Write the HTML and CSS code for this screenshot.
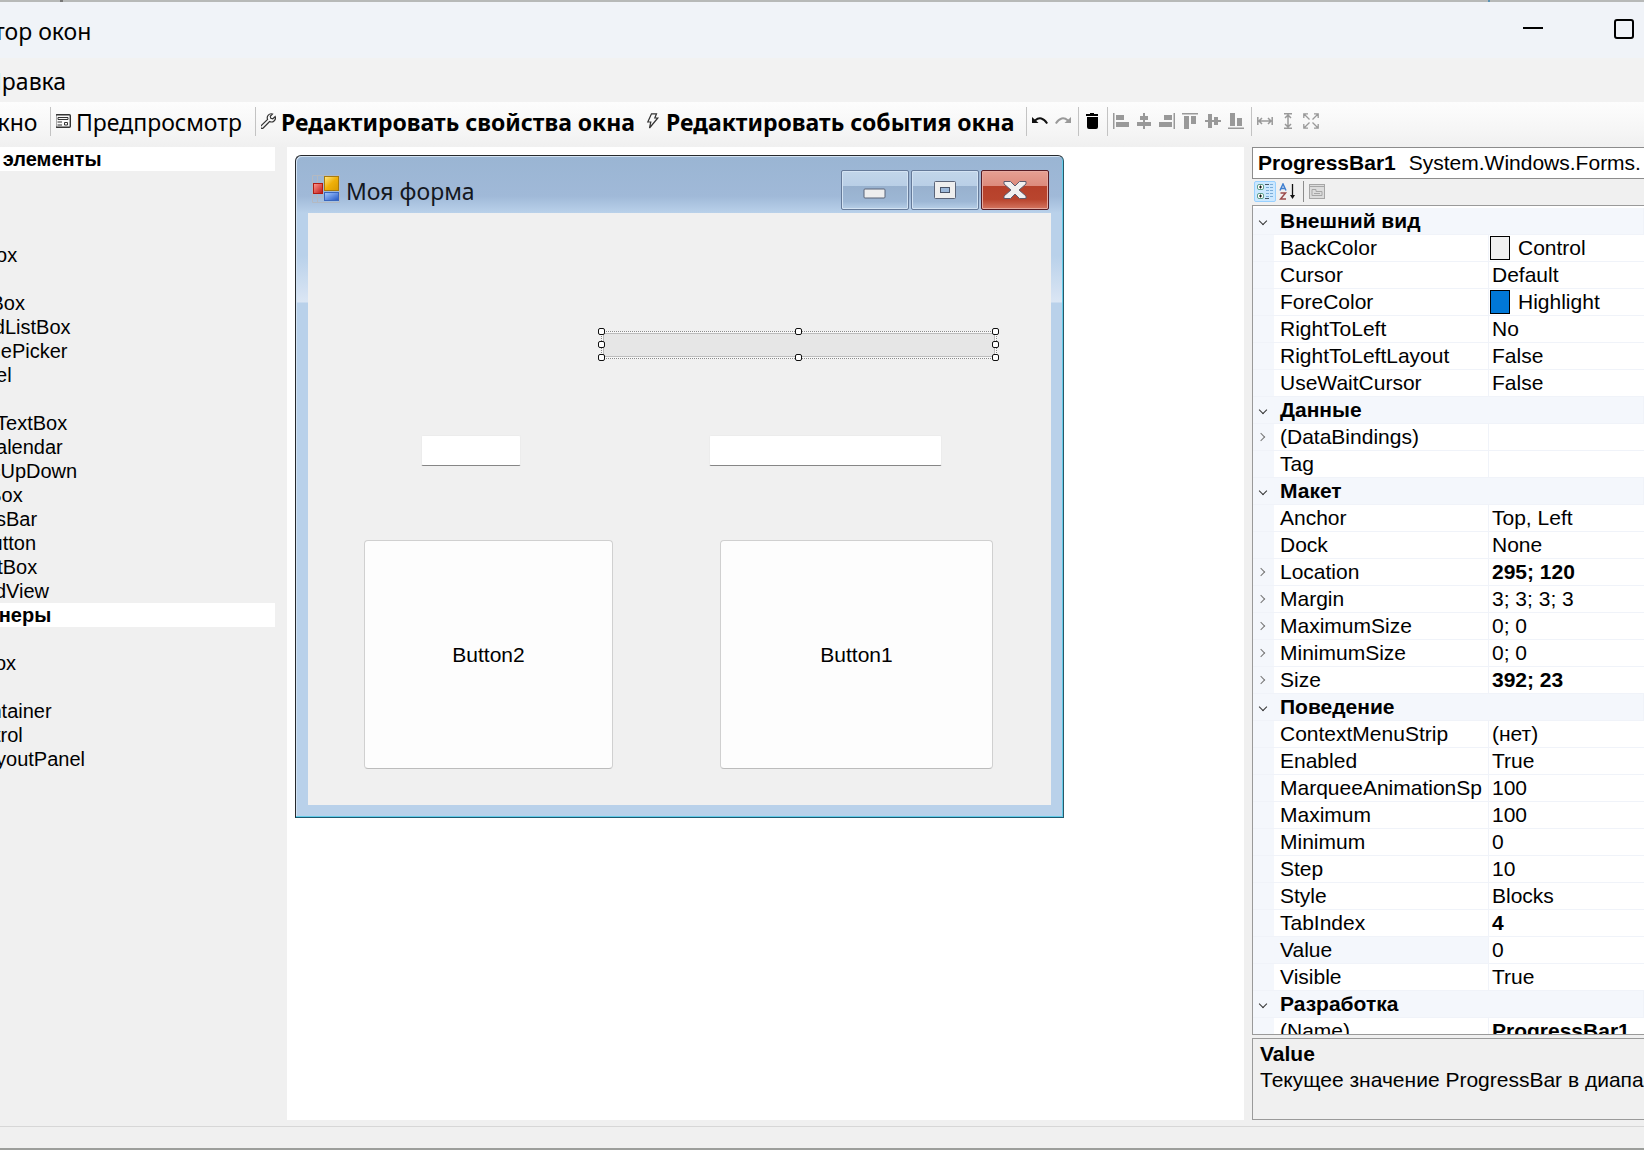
FILE: index.html
```html
<!DOCTYPE html>
<html lang="ru">
<head>
<meta charset="utf-8">
<title>Редактор окон</title>
<link rel="stylesheet" href="styles.css">
</head>
<body>
<div class="app">
  <div class="edge edge-top"></div>
  <header class="titlebar">
    <h1 class="app-title">Редактор окон</h1>
    <div class="caption-buttons">
      <button class="caption" aria-label="Свернуть"><svg width="20" height="20" viewBox="0 0 20 20"><path d="M0 9h20" stroke="#000" stroke-width="2"/></svg></button>
      <button class="caption" aria-label="Развернуть"><svg width="20" height="20" viewBox="0 0 20 20"><rect x="1" y="1" width="18" height="18" rx="2" fill="none" stroke="#000" stroke-width="2"/></svg></button>
    </div>
  </header>
  <nav class="menubar"><button class="menu-item">Правка</button></nav>

  <div class="toolbar" role="toolbar">
    <button class="tool tool-window">Окно</button>
    <span class="sep"></span>
    <button class="tool tool-preview">
      <svg class="icon" width="16" height="16" viewBox="0 0 16 16" fill="none" stroke="#333"><rect x=".7" y="1.7" width="14.6" height="12.6" rx="1" stroke-width="1.4"/><path d="M3 4.500h10v2H3zM9.500 9.500h3v2.500h-3z"/><path d="M2.500 9h4.500M2.500 12h4.500" stroke-width="1.200"/></svg>
      <span>Предпросмотр</span>
    </button>
    <span class="sep"></span>
    <button class="tool tool-props">
      <svg class="icon" width="16" height="16" viewBox="0 0 16 16" fill="none" stroke="#333" stroke-width="1.200"><path d="M12.500 1A4 4 0 0 0 7.600 6.400L1 12.800a1.500 1.500 0 0 0 2.200 2.200L9.600 8.500A4 4 0 0 0 15.200 3.600L12.800 5.800 10.800 5.300 10.300 3.300z"/></svg>
      <span>Редактировать свойства окна</span>
    </button>
    <button class="tool tool-events">
      <svg class="icon" width="16" height="16" viewBox="0 0 16 16" fill="none" stroke="#333" stroke-width="1.200"><path d="M6.500.8h5L9.800 5h3L4.500 15l1.300-6H2.800z"/></svg>
      <span>Редактировать события окна</span>
    </button>
    <span class="sep"></span>
    <button class="tool-icon" aria-label="Отменить"><svg width="16" height="16" viewBox="0 0 16 16"><path d="M3 7.500Q9.500 2 15.200 10.500" fill="none" stroke="#111" stroke-width="2"/><path d="M0 4v6h6.500z" fill="#111"/></svg></button>
    <button class="tool-icon" aria-label="Повторить"><svg width="16" height="16" viewBox="0 0 16 16"><path d="M13 7.500Q6.500 2 .8 10.500" fill="none" stroke="#999" stroke-width="2"/><path d="M16 4v6H9.500z" fill="#999"/></svg></button>
    <span class="sep"></span>
    <button class="tool-icon" aria-label="Удалить"><svg width="16" height="16" viewBox="0 0 16 16"><path d="M2 1h4V0h4v1h4v2H2zM3 4h11v10a2 2 0 0 1-2 2H5a2 2 0 0 1-2-2z"/></svg></button>
    <span class="sep"></span>
    <button class="tool-icon" aria-label="По левому краю"><svg width="16" height="16" viewBox="0 0 16 16" fill="#999"><path d="M0 0h1.500v16H0zM3 2h8v5H3zM3 9h13v5H3z"/></svg></button>
    <button class="tool-icon" aria-label="По центру"><svg width="16" height="16" viewBox="0 0 16 16" fill="#999"><path d="M7 0h2v16H7zM4 3h8v4H4zM1 9h14v4H1z"/></svg></button>
    <button class="tool-icon" aria-label="По правому краю"><svg width="16" height="16" viewBox="0 0 16 16" fill="#999"><path d="M14.500 0H16v16h-1.500zM5 2h8v5H5zM0 9h13v5H0z"/></svg></button>
    <button class="tool-icon" aria-label="По верхнему краю"><svg width="16" height="16" viewBox="0 0 16 16" fill="#999"><path d="M0 0h16v1.500H0zM2 3h5v13H2zM9 3h5v8H9z"/></svg></button>
    <button class="tool-icon" aria-label="По середине"><svg width="16" height="16" viewBox="0 0 16 16" fill="#999"><path d="M0 7h16v2H0zM3 1h4v14H3zM9 4h4v8H9z"/></svg></button>
    <button class="tool-icon" aria-label="По нижнему краю"><svg width="16" height="16" viewBox="0 0 16 16" fill="#999"><path d="M0 14.500h16V16H0zM2 0h5v13H2zM9 5h5v8H9z"/></svg></button>
    <span class="sep"></span>
    <button class="tool-icon" aria-label="Одинаковая ширина"><svg width="16" height="16" viewBox="0 0 16 16" fill="none" stroke="#999" stroke-width="1.500"><path d="M.8 4v8M15.200 4v8M2 8h12M5 5L2 8l3 3M11 5l3 3-3 3"/></svg></button>
    <button class="tool-icon" aria-label="Одинаковая высота"><svg width="16" height="16" viewBox="0 0 16 16" fill="none" stroke="#999" stroke-width="1.500"><path d="M4 .8h8M4 15.200h8M8 2v12M5 5l3-3 3 3M5 11l3 3 3-3"/></svg></button>
    <button class="tool-icon" aria-label="Одинаковый размер"><svg width="16" height="16" viewBox="0 0 16 16" fill="none" stroke="#999" stroke-width="1.300"><path d="M.8 5V.8H5M11 .8h4.200V5M15.200 11v4.200H11M5 15.200H.8V11M1 1l5.500 5.500M15 1L9.500 6.500M15 15L9.500 9.500M1 15l5.500-5.500"/></svg></button>
  </div>

  <main class="workspace">
    <aside class="toolbox">
      <h2 class="group">Общие элементы</h2>
      <ul class="items">
        <li></li><li></li><li></li><li>CheckBox</li><li></li><li>ComboBox</li>
        <li>CheckedListBox</li><li>DateTimePicker</li><li>LinkLabel</li><li></li>
        <li>MaskedTextBox</li><li>MonthCalendar</li><li>NumericUpDown</li><li>PictureBox</li>
        <li>ProgressBar</li><li>RadioButton</li><li>RichTextBox</li><li>DataGridView</li>
      </ul>
      <h2 class="group">Контейнеры</h2>
      <ul class="items">
        <li></li><li>GroupBox</li><li></li><li>SplitContainer</li><li>TabControl</li><li>TableLayoutPanel</li>
      </ul>
    </aside>

    <section class="designer">
      <div class="form-window">
        <div class="form-title">
          <svg class="form-icon" width="28" height="28" viewBox="0 0 28 28">
            <defs>
              <linearGradient id="gy" x1="0" y1="0" x2="1" y2="1"><stop offset="0" stop-color="#ffe98a"/><stop offset=".5" stop-color="#efb008"/><stop offset="1" stop-color="#d99a00"/></linearGradient>
              <linearGradient id="gr" x1="0" y1="0" x2="1" y2="1"><stop offset="0" stop-color="#ff9d92"/><stop offset="1" stop-color="#bd1212"/></linearGradient>
              <linearGradient id="gb" x1="0" y1="0" x2="1" y2="1"><stop offset="0" stop-color="#a8caff"/><stop offset="1" stop-color="#2257c4"/></linearGradient>
            </defs>
            <path d="M.5.500h27v27H.5zM5.500.500v27M.5 22h11" fill="none" stroke="#b3b9c2"/>
            <rect x="12.500" y="1.500" width="14" height="14" fill="url(#gy)" stroke="#a87a0c"/>
            <rect x="1.500" y="8.500" width="9" height="10" fill="url(#gr)" stroke="#b31b10"/>
            <rect x="12.500" y="17.500" width="14" height="8" fill="url(#gb)" stroke="#3a66bd"/>
          </svg>
          <span class="form-caption">Моя форма</span>
          <button class="aero" aria-label="Свернуть форму"><svg width="24" height="20" viewBox="0 0 24 20"><rect x="1" y="9" width="21" height="9" rx="1" fill="#eee" stroke="#5b6478"/></svg></button>
          <button class="aero" aria-label="Развернуть форму"><svg width="24" height="20" viewBox="0 0 24 20"><rect x="1.500" y="1.500" width="21" height="17" rx="1" fill="#eee" stroke="#5b6478"/><rect x="7.500" y="7.500" width="9" height="5" fill="#9db9da" stroke="#4a5468"/></svg></button>
          <button class="aero aero-close" aria-label="Закрыть форму"><svg width="24" height="20" viewBox="0 0 24 20"><path d="M1 1.500h6.500L12 6l4.500-4.500H23V4L16 10l7 6v2.500h-6.500L12 14l-4.500 4.500H1V16l7-6-7-6z" fill="#f0f0f0" stroke="#5d5a6c"/></svg></button>
        </div>
        <div class="client">
          <div class="ctl progress" role="progressbar" aria-label="ProgressBar1" aria-valuenow="0">
            <span class="bar"></span>
            <i class="h nw"></i><i class="h n"></i><i class="h ne"></i><i class="h w"></i><i class="h e"></i><i class="h sw"></i><i class="h s"></i><i class="h se"></i>
          </div>
          <input class="ctl field field-a" aria-label="TextBox1">
          <input class="ctl field field-b" aria-label="TextBox2">
          <button class="ctl push push-a">Button2</button>
          <button class="ctl push push-b">Button1</button>
        </div>
      </div>
    </section>

    <aside class="properties">
      <button class="object-picker" aria-haspopup="listbox"><b>ProgressBar1</b><span>System.Windows.Forms.</span></button>
      <div class="prop-tools">
        <button class="ptool active" aria-label="По категориям"><svg width="18" height="18" viewBox="0 0 18 18" fill="none"><rect x="1.500" y="1.500" width="6" height="5" rx="1.500" fill="#fff" stroke="#5fa089"/><rect x="1.500" y="10.500" width="6" height="5" rx="1.500" fill="#fff" stroke="#5fa089"/><path d="M3 4h3M4.500 2.500v3M3 13h3M4.500 11.500v3" stroke="#111"/><path d="M9 1.500h4M9 15.500h4" stroke="#456"/><path d="M10 4.500h7M10 7.500h7M10 10.500h7M10 13.500h7M14 1.500h3" stroke="#7badd8" stroke-dasharray="3 1"/></svg></button>
        <button class="ptool" aria-label="По алфавиту"><svg width="18" height="18" viewBox="0 0 18 18" fill="none"><path d="M1 7.500L4 1l3 6.500M2 5.500h4" stroke="#3f7fd0" stroke-width="1.500"/><path d="M1.500 10h5l-5 6h5.500" stroke="#9b4a4a" stroke-width="1.500"/><path d="M13.500 1v13" stroke="#111" stroke-width="1.300"/><path d="M11 12h5l-2.500 4z" fill="#111"/></svg></button>
        <span class="psep"></span>
        <button class="ptool" aria-label="Страницы свойств" disabled><svg width="18" height="18" viewBox="0 0 18 18" fill="none" stroke="#a6a6a6"><rect x="1.500" y="1.500" width="15" height="14" fill="#dcdcdc"/><path d="M2 3.500h14M4 6.500h4v2h6v4H4z"/><path d="M6 10.500h6"/></svg></button>
      </div>
      <div class="grid">
        <table class="props">
          <colgroup><col class="c-gutter"><col class="c-name"><col></colgroup>
          <tbody>
          <tr class="cat"><td class="open"></td><th colspan="2">Внешний вид</th></tr>
          <tr><td></td><th>BackColor</th><td><span class="swatch swatch-control"></span>Control</td></tr>
          <tr><td></td><th>Cursor</th><td>Default</td></tr>
          <tr><td></td><th>ForeColor</th><td><span class="swatch swatch-highlight"></span>Highlight</td></tr>
          <tr><td></td><th>RightToLeft</th><td>No</td></tr>
          <tr><td></td><th>RightToLeftLayout</th><td>False</td></tr>
          <tr><td></td><th>UseWaitCursor</th><td>False</td></tr>
          <tr class="cat"><td class="open"></td><th colspan="2">Данные</th></tr>
          <tr><td class="closed"></td><th>(DataBindings)</th><td></td></tr>
          <tr><td></td><th>Tag</th><td></td></tr>
          <tr class="cat"><td class="open"></td><th colspan="2">Макет</th></tr>
          <tr><td></td><th>Anchor</th><td>Top, Left</td></tr>
          <tr><td></td><th>Dock</th><td>None</td></tr>
          <tr><td class="closed"></td><th>Location</th><td><b>295; 120</b></td></tr>
          <tr><td class="closed"></td><th>Margin</th><td>3; 3; 3; 3</td></tr>
          <tr><td class="closed"></td><th>MaximumSize</th><td>0; 0</td></tr>
          <tr><td class="closed"></td><th>MinimumSize</th><td>0; 0</td></tr>
          <tr><td class="closed"></td><th>Size</th><td><b>392; 23</b></td></tr>
          <tr class="cat"><td class="open"></td><th colspan="2">Поведение</th></tr>
          <tr><td></td><th>ContextMenuStrip</th><td>(нет)</td></tr>
          <tr><td></td><th>Enabled</th><td>True</td></tr>
          <tr><td></td><th>MarqueeAnimationSp</th><td>100</td></tr>
          <tr><td></td><th>Maximum</th><td>100</td></tr>
          <tr><td></td><th>Minimum</th><td>0</td></tr>
          <tr><td></td><th>Step</th><td>10</td></tr>
          <tr><td></td><th>Style</th><td>Blocks</td></tr>
          <tr><td></td><th>TabIndex</th><td><b>4</b></td></tr>
          <tr class="selected"><td></td><th>Value</th><td>0</td></tr>
          <tr><td></td><th>Visible</th><td>True</td></tr>
          <tr class="cat"><td class="open"></td><th colspan="2">Разработка</th></tr>
          <tr><td></td><th>(Name)</th><td><b>ProgressBar1</b></td></tr>
          </tbody>
        </table>
      </div>
      <div class="help"><b>Value</b><p>Текущее значение ProgressBar в диапазоне</p></div>
    </aside>
  </main>
  <footer class="status"></footer>
  <div class="edge edge-bottom"></div>
</div>
</body>
</html>
```
FILE: styles.css
```css
* { box-sizing: border-box; }
body { margin: 0; background: #f0f0f0; color: #000; font: 21px/26px "Liberation Sans", Arial, sans-serif; }
h1, h2, p, ul { margin: 0; padding: 0; font-size: inherit; font-weight: inherit; list-style: none; }
button { border: 0; padding: 0; background: none; color: inherit; font: inherit; }
svg { display: block; flex: none; }

.app { display: flex; flex-direction: column; height: 100vh; overflow: hidden; }
.edge { flex: none; height: 2px; background: #b4b7b6; }
.edge-top { background: linear-gradient(90deg, transparent 60px, #777 60px 63px, transparent 63px 1488px, #5b93b5 1488px 1490px, transparent 1490px) #b7b9b8; }
.edge-bottom { background: #9c9e9b; }

.titlebar { display: flex; justify-content: space-between; flex: none; height: 56px; background: #f0f3f8; font: 23px/58px "Noto Sans", sans-serif; }
.app-title { margin-left: -71px; }
.caption-buttons { display: flex; gap: 71px; padding: 0 10px 2px 0; align-items: center; }
.caption { width: 20px; height: 20px; }

.menubar { flex: none; display: flex; height: 44px; background: #f2f2f2; font: 23px/46px "Noto Sans", sans-serif; }
.menu-item { margin-left: -15px; }

.toolbar { flex: none; display: flex; align-items: center; height: 45px; padding-bottom: 7px; background: linear-gradient(#fdfdfd, #f6f6f6 60%, #f0f0f0); font: 23px/38px "Noto Sans", sans-serif; }
.tool { flex: none; display: flex; align-items: center; gap: 5px; white-space: nowrap; overflow: hidden; }
.tool span { padding-top: 2px; }
.tool-window { margin-left: -20px; padding-top: 2px; width: 70px; }
.tool-preview { width: 199px; padding-left: 0; }
.tool-preview .icon, .tool-props .icon { margin-left: -1px; }
.tool-props { width: 384px; font-weight: 700; }
.tool-events { width: 381px; font-weight: 700; }
.tool-icon { flex: none; width: 23px; height: 16px; }
.sep { flex: none; width: 6px; height: 29px; border-left: 1px solid #c3c3c3; }

.workspace { flex: 1; min-height: 0; display: grid; grid-template-columns: 275px 1fr 392px; padding-bottom: 6px; }
.toolbox { overflow: hidden; font-size: 20px; line-height: 24px; white-space: nowrap; }
.group { height: 24px; background: #fff; font-weight: 700; text-indent: -71px; }
.items { margin-left: -74px; }
.items li { height: 24px; }

.designer { margin: 0 8px 0 12px; padding: 8px; background: #fff; }
.form-window {
  display: flex; flex-direction: column; width: 769px; height: 663px; padding: 0 12px 12px;
  border: 1px solid #26292d; border-right-color: #2b5868; border-bottom-color: #1c5a72; border-radius: 6px 6px 0 0;
  background: linear-gradient(#9ab5d3, #a0b9d8 40px, #b9d1ea 57px, #b9d1ea 100px, #dbe6f4 146px, #b9d1ea 147px);
  box-shadow: inset -1px -1px #62cbe8, inset 1px 1px #d3e3f3;
}
.form-title { flex: none; display: flex; align-items: center; gap: 2px; height: 57px; padding-right: 2px; font: 23px/40px "Noto Sans", sans-serif; }
.form-icon { margin: 9px 0 0 4px; }
.form-caption { flex: 1; padding: 13px 0 0 4px; color: #14181f; }
.aero {
  display: flex; align-items: center; justify-content: center; width: 68px; height: 40px; margin-top: 10px;
  border: 1px solid #657a99; border-radius: 2px; box-shadow: inset 0 0 0 1px #d3e3f3;
  background: linear-gradient(#c2d6ea, #b9cfe6 40%, #98b1ce 40%, #9db7d5 80%, #b7cfe7);
}
.aero-close { border-color: #551c24; box-shadow: inset 0 0 0 1px #e5aaa0; background: linear-gradient(#e5a093, #dc8a7c 40%, #b6402a 40%, #b9452e 75%, #d47560); }

.client { position: relative; flex: 1; background: #f0f0f0; }
.ctl { position: absolute; }
.progress { left: 293px; top: 118px; width: 396px; height: 28px; border: 1px dotted #8a8a8a; background: #f7f7f7; }
.bar { position: absolute; inset: 1px; border: 1px solid #bcbcbc; background: #e6e6e6; }
.h { position: absolute; width: 7px; height: 7px; margin: -4px; border: 1px solid #111; border-radius: 2px; background: #fff; }
.nw { left: 0; top: 0; } .n { left: 50%; top: 0; } .ne { left: 100%; top: 0; }
.w { left: 0; top: 50%; } .e { left: 100%; top: 50%; }
.sw { left: 0; top: 100%; } .s { left: 50%; top: 100%; } .se { left: 100%; top: 100%; }
.field { height: 31px; top: 222px; border: 1px solid #ececec; border-bottom-color: #868686; border-radius: 2px; background: #fff; }
.field-a { left: 113px; width: 100px; }
.field-b { left: 401px; width: 233px; }
.push { top: 327px; height: 229px; border: 1px solid #d0d0d0; border-bottom-color: #bcbcbc; border-radius: 4px; background: #fdfdfd; }
.push-a { left: 56px; width: 249px; }
.push-b { left: 412px; width: 273px; }

.properties { min-width: 0; display: flex; flex-direction: column; overflow: hidden; white-space: nowrap; }
.object-picker { flex: none; display: flex; gap: 13px; height: 32px; padding-left: 5px; border: 1px solid #8c8c8c; border-right: 0; background: #fff; line-height: 30px; overflow: hidden; }
.prop-tools { flex: none; display: flex; gap: 1px; height: 26px; padding: 2px 0 3px 2px; }
.ptool { width: 22px; height: 21px; display: flex; align-items: center; justify-content: center; border: 1px solid transparent; border-radius: 2px; }
.active { border-color: #99d1ff; background: #cce8ff; }
.psep { width: 2px; margin-left: 3px; border-left: 1px solid #8c8c8c; }
.grid { flex: 1; min-height: 0; overflow: hidden; border: 1px solid #9a9a9a; border-right: 0; background: #fff; padding-top: 2px; }
.props { width: 100%; table-layout: fixed; border-collapse: separate; border-spacing: 0; text-align: left; }
.c-gutter { width: 21px; }
.c-name { width: 215px; }
.props td, .props th { height: 27px; padding: 0; border-bottom: 1px solid #f0f3f9; font-weight: 400; line-height: 26px; overflow: hidden; }
.props th { padding-left: 6px; border-right: 1px solid #f0f3f9; }
.props td + th + td { padding-left: 3px; }
.props td:first-child, .props .cat th, .selected th { background: #f4f7fc; }
.props .cat th { font-weight: 700; }
.open::before, .closed::before { content: ""; display: block; width: 5px; height: 5px; margin-left: 7px; border: solid #333; border-width: 0 1px 1px 0; transform: rotate(45deg); }
.closed::before { margin-left: 5px; border-color: #777; transform: rotate(-45deg); }
.swatch { display: inline-block; vertical-align: top; width: 20px; height: 24px; margin: 1px 8px 0 -2px; border: 1px solid #000; }
.swatch-control { background: #f0f0f0; }
.swatch-highlight { background: #0078d7; }
.help { flex: none; height: 82px; margin-top: 3px; padding: 2px 0 0 7px; border: 1px solid #9a9a9a; border-right: 0; overflow: hidden; }
.status { flex: none; height: 22px; border-top: 1px solid #d7d7d7; }
```
